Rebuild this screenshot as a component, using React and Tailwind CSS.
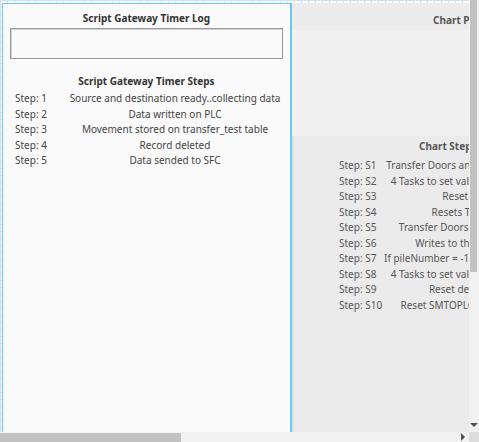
const timerSteps = [
  ["Step: 1", "Source and destination ready..collecting data"],
  ["Step: 2", "Data written on PLC"],
  ["Step: 3", "Movement stored on transfer_test table"],
  ["Step: 4", "Record deleted"],
  ["Step: 5", "Data sended to SFC"],
];

const chartSteps = [
  ["Step: S1", "Transfer Doors and Piles to the SMT"],
  ["Step: S2", "4 Tasks to set values on the PLC(s)"],
  ["Step: S3", "Reset tasks."],
  ["Step: S4", "Resets Transfers"],
  ["Step: S5", "Transfer Doors to the SMT line"],
  ["Step: S6", "Writes to the PLC's tags"],
  ["Step: S7", "If pileNumber = -1 then go back to S1"],
  ["Step: S8", "4 Tasks to set values on the PLC(s)"],
  ["Step: S9", "Reset details tags"],
  ["Step: S10", "Reset SMTOPLC transfer tags."],
];

export default function App() {
  return (
    <div className="w-[479px] h-[442px] overflow-hidden grid grid-cols-[469px_10px] grid-rows-[432px_10px] bg-white font-['Noto_Sans',sans-serif] text-[10px] text-[#444]">
      {/* Canvas */}
      <div className="overflow-hidden pt-[3px] pl-[2px] flex bg-white bg-[linear-gradient(to_right,#c9e3f5_1px,transparent_1px),linear-gradient(to_bottom,#c9e3f5_1px,transparent_1px)] bg-[size:7px_7px]">
        {/* Left view */}
        <div className="w-[290px] shrink-0 h-[440px] bg-[#fafafa] border-l border-t border-r-2 border-[#6cc8f7] flex flex-col">
          <div className="h-[24px] pt-[8px] leading-[12px] text-center font-bold text-[#333]">
            Script Gateway Timer Log
          </div>
          <div className="mx-[7px] h-[31px] border border-[#9a9a9a] shadow-[inset_1px_1px_0_#d0d0d0]"></div>
          <div className="mt-[15px] leading-[14px] text-center font-bold text-[#333]">
            Script Gateway Timer Steps
          </div>
          <div className="mt-[3px]">
            {timerSteps.map(([s, d]) => (
              <div key={s} className="flex leading-[15.5px]">
                <div className="w-[57px] pl-[12px] shrink-0">{s}</div>
                <div className="w-[230px] text-center whitespace-nowrap">{d}</div>
              </div>
            ))}
          </div>
        </div>
        {/* Right view */}
        <div className="flex-1 h-[440px] overflow-hidden bg-[#ebebeb] shadow-[inset_2px_0_3px_rgba(0,0,0,0.05)] flex flex-col">
          <div className="h-[27px] shrink-0 bg-[#ececec] pt-[11px] pl-[141px] leading-[12px] font-bold text-[#555] whitespace-nowrap">
            Chart Progress
          </div>
          <div className="h-[106px] shrink-0 bg-[#f0f0f0]"></div>
          <div className="mt-[4px] leading-[12px] pl-[127px] font-bold text-[#555] whitespace-nowrap">
            Chart Steps
          </div>
          <div className="mt-[6px]">
            {chartSteps.map(([s, d]) => (
              <div key={s} className="flex leading-[15.5px] text-[#555] whitespace-nowrap">
                <div className="w-[92px] pl-[47px] shrink-0">{s}</div>
                <div className="w-[172px] shrink-0 text-center">{d}</div>
              </div>
            ))}
          </div>
        </div>
      </div>
      {/* Vertical scrollbar */}
      <div className="bg-[#f1f1f1] flex flex-col">
        <div className="h-[272px] ml-[1px] mr-[2px] bg-[#c1c1c1]"></div>
        <div className="flex-1"></div>
        <div className="h-[14px] flex items-center justify-center">
          <div className="w-0 h-0 border-l-[4px] border-r-[4px] border-t-[4px] border-l-transparent border-r-transparent border-t-[#505050]"></div>
        </div>
      </div>
      {/* Horizontal scrollbar */}
      <div className="bg-[#f1f1f1] flex items-center">
        <div className="w-[181px] h-[9px] bg-[#c1c1c1]"></div>
        <div className="flex-1"></div>
        <div className="w-[12px] flex items-center justify-center">
          <div className="w-0 h-0 border-t-[4px] border-b-[4px] border-l-[4px] border-t-transparent border-b-transparent border-l-[#505050]"></div>
        </div>
      </div>
      <div className="bg-[#dcdcdc]"></div>
    </div>
  );
}
